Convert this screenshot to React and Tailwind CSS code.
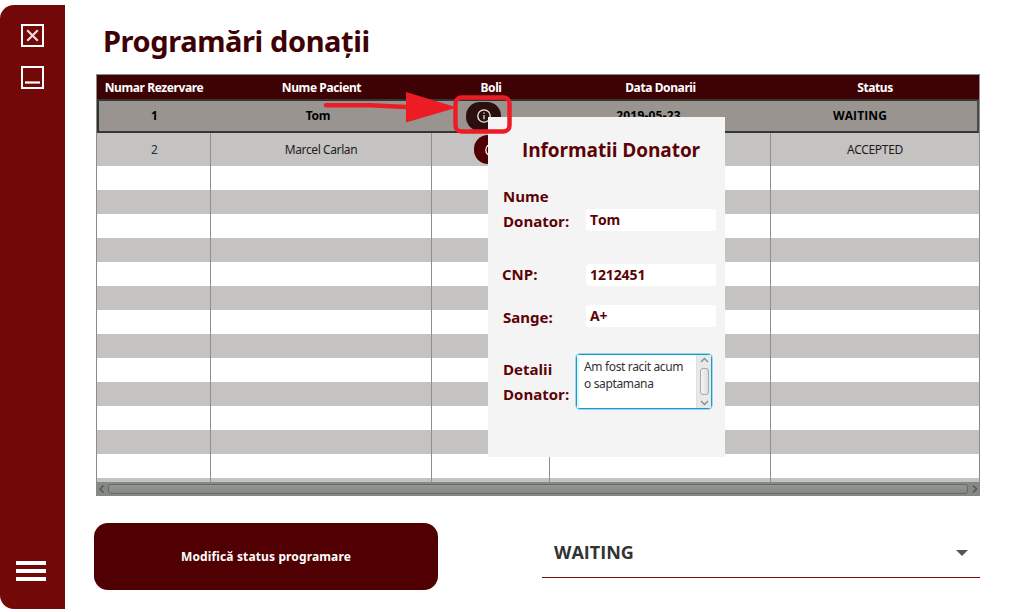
const noto = "font-['Noto_Sans','Open_Sans',sans-serif]";
const open = "font-['Open_Sans','Noto_Sans',sans-serif]";

const headers = ["Numar Rezervare", "Nume Pacient", "Boli", "Data Donarii", "Status"];
const stripes = Array.from({ length: 14 }, (_, i) => i);

function InfoButton({ active }) {
  return (
    <span
      className={`flex h-[29px] w-[35px] items-center justify-center rounded-[14px] ${
        active ? "bg-[#2b0f0d]" : "bg-[#500002]"
      }`}
    >
      <svg width="14" height="14" viewBox="0 0 14 14" fill="none" stroke="#f4eeee">
        <circle cx="7" cy="7" r="6.2" strokeWidth="1.3" />
        <path d="M7 6v4.2M7 3.6v1.2" strokeWidth="1.2" />
      </svg>
    </span>
  );
}

function Sidebar() {
  return (
    <aside className="mt-[5px] flex h-[604px] w-[65px] shrink-0 flex-col rounded-l-[14px] bg-[#730808] pt-[19px]">
      <svg className="ml-[21px]" width="23" height="23" fill="none" stroke="#fff">
        <rect x="1" y="1" width="21" height="21" strokeWidth="2" />
        <path d="M6.2 6.2L16.8 16.8M16.8 6.2L6.2 16.8" strokeWidth="2.1" stroke="#f0dede" />
      </svg>
      <svg className="mt-[19px] ml-[21px]" width="23" height="23" fill="none" stroke="#fff">
        <rect x="1" y="1" width="21" height="21" strokeWidth="2" />
        <path d="M4 16.5H19" strokeWidth="2.2" />
      </svg>
      <div className="mt-auto mb-[28px] ml-[16px] flex w-[30px] flex-col gap-1">
        <span className="h-1 bg-white" />
        <span className="h-1 bg-white" />
        <span className="h-1 bg-white" />
      </div>
    </aside>
  );
}

function HScroll() {
  return (
    <div className="flex h-[14px] items-center bg-[#868885] pr-[2px] pl-[3px]">
      <svg width="9" height="10" fill="none" stroke="#555855" strokeWidth="1.6">
        <path d="M4.5 1.5L1.2 5L4.5 8.5" />
      </svg>
      <div className="h-[10px] flex-1 rounded-[3px] border border-[#666966] bg-linear-to-b from-[#949693] to-[#858885]" />
      <svg width="10" height="10" fill="none" stroke="#555855" strokeWidth="1.6">
        <path d="M5 1.5L8.5 5L5 8.5" />
      </svg>
    </div>
  );
}

function Table() {
  const cols = "grid grid-cols-[114px_221px_118px_221px_208px]";
  const line = "border-r border-[#8f8f8f] last:border-r-0";
  return (
    <div className="flex h-[422px] w-[884px] flex-col">
      <div className={`flex h-[408px] flex-col overflow-hidden border border-b-0 border-[#8b8b88] text-[12px] ${noto}`}>
        <div className={`${cols} h-[24px] shrink-0 items-center bg-[#3f0204] pt-[2px] text-center font-bold leading-[22px] tracking-[-0.4px] text-white`}>
          {headers.map((h) => (
            <span key={h} className="whitespace-nowrap">{h}</span>
          ))}
        </div>
        <div className="grid h-[34px] shrink-0 grid-cols-[111px_216px_115px_215px_208px] items-center border-2 border-t-[#343634] border-r-[#484b48] border-b-[#343634] border-l-[#303230] bg-[#999490] text-center font-bold text-black">
          <span>1</span>
          <span className="tracking-[-0.2px]">Tom</span>
          <span className="flex justify-center"><InfoButton active /></span>
          <span className="tracking-[0.2px]">2019-05-23</span>
          <span className={`${open} tracking-[0.1px]`}>WAITING</span>
        </div>
        <div className={`${cols} h-[33px] shrink-0 bg-[#c5c3c1] text-center leading-[33px] text-[#1c1c1c]`}>
          <span className={`${line} pl-[2px] text-[#17304a]`}>2</span>
          <span className={`${line} tracking-[-0.4px]`}>Marcel Carlan</span>
          <span className={`${line} flex items-center justify-center pl-[2px]`}><InfoButton /></span>
          <span className={line} />
          <span className="tracking-[-0.3px]">ACCEPTED</span>
        </div>
        {stripes.map((i) => (
          <div key={i} className={`${cols} h-[24px] shrink-0 ${i % 2 ? "bg-[#c5c3c1]" : "bg-white"}`}>
            {headers.map((h) => (
              <span key={h} className={line} />
            ))}
          </div>
        ))}
      </div>
      <HScroll />
    </div>
  );
}

function Field({ value }) {
  return (
    <div className="h-[22px] w-[130px] rounded-[3px] bg-white pl-1 text-[14px] font-bold leading-[22px] tracking-[-0.1px]">
      {value}
    </div>
  );
}

function Modal() {
  const label = "w-[83px] text-[15px] font-bold leading-[25px] whitespace-nowrap";
  return (
    <section className={`absolute top-[117px] left-[488px] h-[340px] w-[237px] bg-[#f4f4f4] pl-[15px] text-[#5c0205] ${open}`}>
      <h2 className="mt-[19px] ml-[19px] text-[19px] font-bold leading-[28px] tracking-[-0.1px] whitespace-nowrap">Informatii Donator</h2>
      <div className="mt-[20px] flex h-[50px] items-end">
        <div className={label}>Nume<br />Donator:</div>
        <div className="mb-[3px]"><Field value="Tom" /></div>
      </div>
      <div className="mt-[28px] flex h-[25px] items-center">
        <div className={`${label} -ml-px !w-[84px]`}>CNP:</div>
        <Field value="1212451" />
      </div>
      <div className="mt-[18px] flex h-[25px] items-start">
        <div className={`${label} ${noto}`}>Sange:</div>
        <Field value="A+" />
      </div>
      <div className="mt-[24px] flex items-start">
        <div className={`${label} mt-[3px] !w-[73px]`}>Detalii<br />Donator:</div>
        <div className="flex h-[55px] w-[136px] rounded-[4px] border-[1.5px] border-[#119fd0] bg-white text-[#333] shadow-[0_0_0_0.7px_#119fd080]">
          <p className={`w-[119px] shrink-0 border-l-2 border-[#e3f3fa] pt-[3px] pl-[5px] text-[12px] leading-[17px] tracking-[-0.35px] whitespace-nowrap ${noto}`}>
            Am fost racit acum<br />o saptamana
          </p>
          <div className="flex w-[15px] flex-col items-center justify-between border-l border-[#d6e4ea] bg-[#e9e9e9] py-[2px]">
            <svg width="9" height="6" fill="none" stroke="#8c8c8c" strokeWidth="1.4"><path d="M1 5L4.5 1.5L8 5" /></svg>
            <div className="h-[27px] w-[9px] rounded-[3px] border border-[#a9a9a9] bg-linear-to-r from-[#f5f5f5] to-[#dedede]" />
            <svg width="9" height="6" fill="none" stroke="#8c8c8c" strokeWidth="1.4"><path d="M1 1L4.5 4.5L8 1" /></svg>
          </div>
        </div>
      </div>
    </section>
  );
}

export default function App() {
  return (
    <div className={`relative flex h-[612px] w-[1018px] overflow-hidden bg-white ${noto}`}>
      <Sidebar />
      <main className="flex flex-col pl-[29px]">
        <h1 className="mt-[20px] ml-[9px] h-[54px] text-[29px] font-bold leading-[42px] tracking-[-0.4px] whitespace-nowrap text-[#3f0204]">Programări donații</h1>
        <div className="ml-[2px]"><Table /></div>
        <div className="mt-[27px] flex">
          <button className="h-[67px] w-[344px] rounded-[14px] bg-[#500002] text-[12px] font-bold tracking-[0.13px] text-white">
            Modifică status programare
          </button>
          <div className={`ml-[104px] flex h-[55px] w-[438px] items-center justify-between border-b border-[#731013] pt-[4px] pr-[12px] pl-[12px] text-[18px] font-bold text-[#333] ${open}`}>
            <span>WAITING</span>
            <svg className="mt-[2px]" width="12" height="6"><path d="M0 0H12L6 6Z" fill="#555" /></svg>
          </div>
        </div>
      </main>
      <Modal />
      <svg className="absolute top-[88px] left-[320px]" width="200" height="50" fill="none">
        <path d="M6 17.2H50L86 19H90" stroke="#ed1c24" strokeWidth="4.6" strokeLinecap="round" />
        <path d="M86 4V34.5L137 19.5Z" fill="#ed1c24" />
        <rect x="135.5" y="9.5" width="54" height="34" rx="6" stroke="#ed1c24" strokeWidth="4.5" />
      </svg>
    </div>
  );
}
